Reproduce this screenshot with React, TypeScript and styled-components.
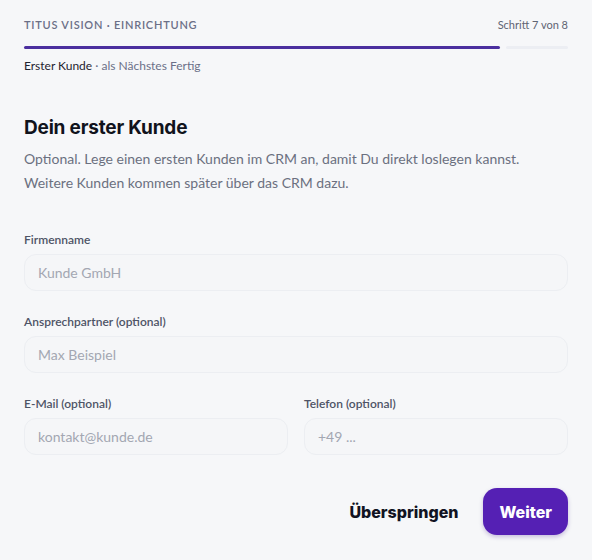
import React from 'react'
import styled, {createGlobalStyle} from 'styled-components'

const GlobalStyle = createGlobalStyle`
  html, body {
    margin: 0;
    padding: 0;
    background: #f6f7f9;
  }
  body {
    font-family: Lato, 'Open Sans', sans-serif;
    color: #111827;
  }
  * { box-sizing: border-box; }
`

const Page = styled.div`
  width: 592px;
  min-height: 560px;
  padding: 17px 24px 24px;
  background: #f6f7f9;
`

const TopBar = styled.div`
  display: flex;
  justify-content: space-between;
  align-items: center;
  height: 16px;
  line-height: 16px;
`

const Brand = styled.div`
  font-size: 11px;
  font-weight: 600;
  letter-spacing: 0.07em;
  text-transform: uppercase;
  color: #6b6f87;
`

const StepCount = styled.div`
  font-size: 11px;
  color: #5f6473;
`

const Progress = styled.div`
  display: flex;
  gap: 6px;
  margin-top: 13px;
`

const Filled = styled.div<{$pct: number}>`
  flex: 0 0 ${p => p.$pct}%;
  height: 3px;
  border-radius: 2px;
  background: #4b2f9f;
`

const Track = styled.div`
  flex: 1;
  height: 3px;
  border-radius: 2px;
  background: #eceef3;
`

const Crumb = styled.div`
  margin-top: 9px;
  font-size: 12px;
  line-height: 16px;
  color: #1f2330;
  span {
    color: #6b7088;
  }
`

const Title = styled.h1`
  margin: 42px 0 0;
  font-family: Inter, 'Noto Sans', sans-serif;
  font-size: 19px;
  line-height: 24px;
  font-weight: 700;
  letter-spacing: -0.01em;
  color: #10131c;
`

const Lead = styled.p`
  margin: 7px 0 0;
  font-size: 14px;
  line-height: 24px;
  color: #6b7080;
`

const Form = styled.div`
  display: flex;
  flex-direction: column;
  gap: 23px;
  margin-top: 37px;
`

const Row = styled.div`
  display: grid;
  grid-template-columns: 1fr 1fr;
  gap: 16px;
`

const Field = styled.label`
  display: flex;
  flex-direction: column;
  gap: 6px;
`

const Label = styled.span`
  font-size: 12px;
  line-height: 16px;
  font-weight: 600;
  color: #4e5466;
`

const Input = styled.input`
  height: 37px;
  width: 100%;
  padding: 0 13px;
  border: 1px solid #eceef2;
  border-radius: 12px;
  background: #f5f6f8;
  font-family: Lato, 'Open Sans', sans-serif;
  font-size: 14px;
  color: #111827;
  outline: none;
  &::placeholder {
    color: #a3a7b2;
  }
`

const Actions = styled.div`
  display: flex;
  justify-content: flex-end;
  align-items: center;
  gap: 25px;
  margin-top: 33px;
`

const Button = styled.button<{$variant?: 'primary' | 'ghost'}>`
  height: 47px;
  border: 0;
  border-radius: 14px;
  font-family: Inter, 'Noto Sans', sans-serif;
  font-size: 16px;
  font-weight: 800;
  cursor: pointer;
  padding: ${p => (p.$variant === 'primary' ? '0 16px' : '0')};
  background: ${p => (p.$variant === 'primary' ? '#5520b4' : 'transparent')};
  color: ${p => (p.$variant === 'primary' ? '#ffffff' : '#111322')};
  box-shadow: ${p =>
    p.$variant === 'primary' ? '0 2px 4px rgba(60, 20, 140, 0.25)' : 'none'};
`

export default function App() {
  return (
    <Page>
      <GlobalStyle />
      <TopBar>
        <Brand>Titus Vision · Einrichtung</Brand>
        <StepCount>Schritt 7 von 8</StepCount>
      </TopBar>
      <Progress>
        <Filled $pct={(7 / 8) * 100} />
        <Track />
      </Progress>
      <Crumb>
        Erster Kunde <span>· als Nächstes Fertig</span>
      </Crumb>

      <Title>Dein erster Kunde</Title>
      <Lead>
        Optional. Lege einen ersten Kunden im CRM an, damit Du direkt loslegen kannst.
        <br />
        Weitere Kunden kommen später über das CRM dazu.
      </Lead>

      <Form>
        <Field>
          <Label>Firmenname</Label>
          <Input placeholder="Kunde GmbH" />
        </Field>
        <Field>
          <Label>Ansprechpartner (optional)</Label>
          <Input placeholder="Max Beispiel" />
        </Field>
        <Row>
          <Field>
            <Label>E-Mail (optional)</Label>
            <Input placeholder="kontakt@kunde.de" />
          </Field>
          <Field>
            <Label>Telefon (optional)</Label>
            <Input placeholder="+49 ..." />
          </Field>
        </Row>
      </Form>

      <Actions>
        <Button $variant="ghost">Überspringen</Button>
        <Button $variant="primary">Weiter</Button>
      </Actions>
    </Page>
  )
}
